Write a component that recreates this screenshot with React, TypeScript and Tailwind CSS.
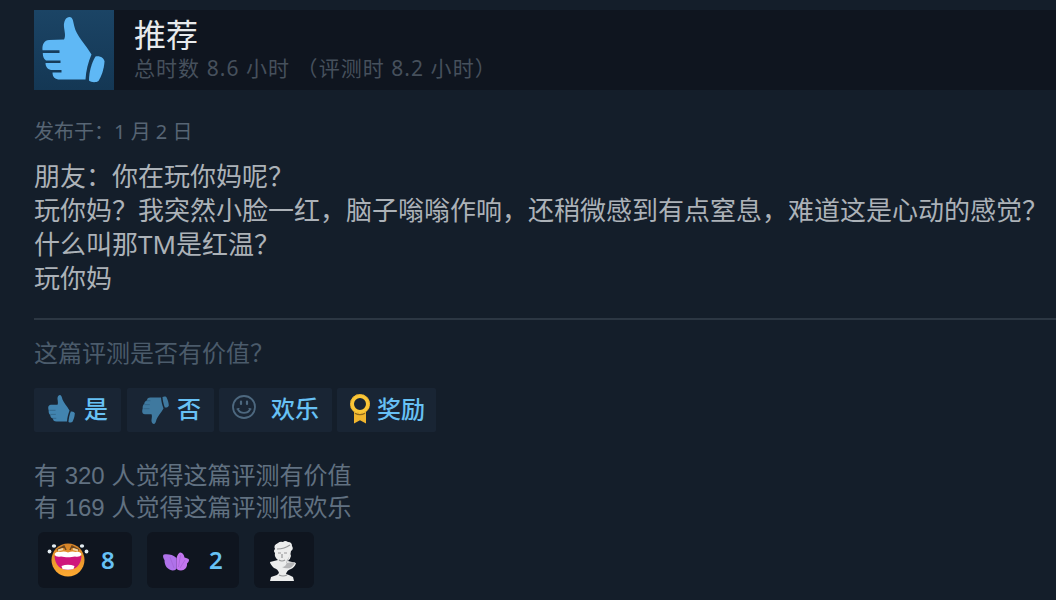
import type { ReactNode } from "react";

function ThumbIcon({ className }: { className?: string }) {
  return (
    <svg className={className} viewBox="0 0 64 66" fill="currentColor" xmlns="http://www.w3.org/2000/svg">
      <path d="M22 10 C21.500 4 24 0 27.500 0 C31 .2 31 4 32.500 10 C34 18 44 28 49.500 37.500 C46 45 44 54 43.500 62.500 L18 62.500 C13 62.500 10.500 60 10.500 55.500 L19.500 55.500 L19.500 53 L9 53 C5 52 3.500 49 3.500 46 L18.500 46 L18.500 43.500 L4 43.500 C1.500 42 .8 39 .8 36 L17.500 36 L17.500 33.300 L.5 33.300 C0 27 2.500 23.300 7 23 L22 22.500 C24 19 22.500 15 22 10 Z" />
      <path d="M53.500 39.500 C58 38.500 62 41 62.500 44.500 C62 53 59 60 56.500 64 C54 65.800 49 65.500 47 63.500 C47 55 49.500 46 53.500 39.500 Z" />
    </svg>
  );
}

function SmallThumbIcon({ className }: { className?: string }) {
  return (
    <svg className={className} width="27" height="28" viewBox="0 0 27 28" fill="currentColor">
      <path d="M9.500 4C9.300 1.500 10.500 0 12 0c1.500.2 1.800 2 2.500 4.500 1 3 4.500 6.500 7 11-1.300 3.500-2.200 7-2.500 11L8.500 26.500c-2.500 0-3.500-1-3.500-3-1.800-.5-2.500-1.500-2.700-3.300C1 19 .5 17.500.7 15.500-.5 12 .5 10 3 9.800h6.500C10.300 8 9.700 6 9.500 4z" />
      <path d="M22.800 16.500c2-.4 3.700.5 4 2-.2 3.500-1.300 6.500-2.500 8.500-1 .7-2.800.6-3.800-.1.200-3.600 1-7.100 2.300-10.400z" />
      <path d="M1.500 15.300h6M2.300 19.400h5.500M4.500 23.300h3.800" stroke="#2f5f80" strokeWidth=".7" />
    </svg>
  );
}

function SmileIcon() {
  return (
    <svg width="26" height="26" viewBox="0 0 26 26" fill="none" stroke="#4d687f" strokeWidth="1.800" strokeLinecap="round">
      <circle cx="13" cy="13" r="11" />
      <path d="M10 7.500v2.500M16 7.500v2.500" strokeWidth="2.200" />
      <path d="M7 15.500c2.500 4.500 9.500 4.500 12 0" />
      <path d="M6 15l2-.5M20 15l-2-.5" strokeWidth="1.200" />
    </svg>
  );
}

function AwardIcon() {
  return (
    <svg width="22" height="32" viewBox="0 0 22 32" fill="none">
      <path d="M5 18h12v12.500l-6-3.300-6 3.300z" fill="#f0b52e" />
      <path d="M6 20q5 3 10 0" stroke="#8d6a1e" strokeWidth="1.500" />
      <circle cx="11" cy="11" r="8" stroke="#fac637" strokeWidth="4" />
      <circle cx="11" cy="11" r="9.500" stroke="#e0a226" strokeWidth="1" strokeDasharray="2 2" />
    </svg>
  );
}

function LaughEmoji() {
  return (
    <svg width="42" height="36" viewBox="0 0 42 36" fill="none">
      <defs>
        <linearGradient id="face" x1="0" y1="0" x2="0" y2="1">
          <stop offset="0" stopColor="#d68327" />
          <stop offset="1" stopColor="#ffab32" />
        </linearGradient>
      </defs>
      <circle cx="21" cy="18" r="16.500" fill="url(#face)" />
      <path d="M10 8l7-4 2 4M32 8l-7-4-2 4" stroke="#6c4720" strokeWidth="1.500" />
      <path d="M11 8.500l5-1.500M26 7l5 1.500" stroke="#efd2a0" strokeWidth="2" />
      <path d="M7.500 14q13.500-3 27 0c-.5 9-6 14-13.500 14S8 23 7.500 14z" fill="#cf177c" />
      <path d="M7.500 12q2-3 6-2 4-1 7.500.5 4-1.500 7.500-.5 4-1 6 2c-1 3-4 3-6.500 2.500-4 1-10 1-14 0-3 .5-5.500.5-6.500-2.500z" fill="#fff" />
      <path d="M14.500 24q6.500-2.500 13 0l-1 3q-5.500 1.500-11 0z" fill="#fff" />
      <g fill="#e4edf2">
        <ellipse cx="7" cy="4" rx="2.200" ry="1.800" />
        <circle cx="2.500" cy="9.500" r="1.900" />
        <ellipse cx="35" cy="4" rx="2.200" ry="1.800" />
        <circle cx="39.500" cy="9.500" r="1.900" />
      </g>
    </svg>
  );
}

function ButterflyEmoji() {
  return (
    <svg width="28" height="20" viewBox="0 0 28 20">
      <path d="M14.500 6C11 2.500 6 2 2 2.500.5 3 1 6 2.500 8c0 6 3 9.500 8 10.500 3 0 4-1 4-3z" fill="#af72ea" />
      <path d="M14.500 7C15 3 17 .5 18.500.5c2 .5 3.500 2 4 5 2 .5 4.500 1 4.500 2.500s-1 2.500-2 3.500c.5 4-2.500 7-6 7-3 0-4.500-1-4.500-3z" fill="#c376f0" />
      <path d="M14.500 8v9M8 5l4 11M18.500 3l-2 12M23 8l-5 8" stroke="#9d5fd0" strokeWidth=".6" />
    </svg>
  );
}

function BustEmoji() {
  return (
    <svg width="28" height="42" viewBox="0 0 28 42">
      <path d="M9 3q2-2 5-1 2-2 5 0 4 0 4 4 2 3-1 5-1 3 0 5-1 4-3 5l8 2q-1 4-5 6-4 1-5 5l3 1 4 2 1 4H1l1-4 6-2 2-2q-1-4-5-5-4-4-4-6l8-2q-4-3-3-7-2-2 0-4-2-4 3-6z" fill="#eceded" />
      <path d="M20 12q1 5-2 8l-1 3 9-1q-1 4-5 6-5 1-8-1 4 0 5-5 3-4 2-10z" fill="#b4b5b7" />
      <path d="M8 9q4 0 7-1t6-3M9 13h3M15 13h3M13 14v4M10 20q3 2 6 0M10 35q4 2 8 0" stroke="#97989a" strokeWidth="1.200" fill="none" />
    </svg>
  );
}

function VoteButton({ className, children }: { className: string; children: ReactNode }) {
  return (
    <button className={`flex h-[44px] items-center rounded-[2px] bg-[#192534] text-[24px] leading-[44px] font-medium text-[#67c1f5] ${className}`}>
      {children}
    </button>
  );
}

export default function App() {
  return (
    <main
      lang="zh-CN"
      className="h-[600px] w-full overflow-hidden bg-[#141e2a] pt-[10px] pl-[34px] font-['Liberation_Sans','Noto_Sans_CJK_SC',sans-serif] whitespace-nowrap"
    >
      {/* Recommendation header */}
      <header className="flex h-[80px] bg-[#0f151f]">
        <div className="flex h-[80px] w-[80px] items-start bg-linear-to-b from-[#1b4465] to-[#143754] pt-[7px] pl-[8px]">
          <ThumbIcon className="h-[66px] w-[64px] text-[#5fb8f5]" />
        </div>
        <div className="pl-[20px]">
          <h1 className="h-[44px] text-[32px] leading-[52px] text-[#e8eaec]">推荐</h1>
          <p className="font-['Noto_Sans','Noto_Sans_CJK_SC',sans-serif] text-[21px] leading-[28px] tracking-[1.05px] text-[#46505c]">
            总时数 8.6 小时 （评测时 8.2 小时）
          </p>
        </div>
      </header>

      <p className="mt-[28px] h-[28px] font-['Noto_Sans','Noto_Sans_CJK_SC',sans-serif] text-[20px] leading-[28px] text-[#576574]">
        发布于：1 月 2 日
      </p>

      {/* Review body */}
      <div className="mt-[13px] h-[161px] border-b-2 border-[#2c3743] font-['Noto_Sans','Noto_Sans_CJK_SC',sans-serif] text-[26px] leading-[34px] text-[#acb2b8]">
        <p>朋友：你在玩你妈呢？</p>
        <p>玩你妈？我突然小脸一红，脑子嗡嗡作响，还稍微感到有点窒息，难道这是心动的感觉？</p>
        <p>什么叫那TM是红温？</p>
        <p>玩你妈</p>
      </div>

      <p className="mt-[18px] h-[32px] text-[24px] leading-[32px] text-[#4b5b6b]">这篇评测是否有价值？</p>

      {/* Vote controls */}
      <div className="mt-[18px] flex">
        <VoteButton className="w-[87px] pl-[14px]">
          <SmallThumbIcon className="mr-[9px] mb-[2px] text-[#4284b0]" />
          是
        </VoteButton>
        <VoteButton className="ml-[6px] w-[87px] pl-[15px]">
          <SmallThumbIcon className="mr-[8px] -scale-y-100 text-[#3f799f]" />
          否
        </VoteButton>
        <VoteButton className="ml-[5px] w-[113px] pl-[12px]">
          <span className="mr-[14px] mb-[6px]">
            <SmileIcon />
          </span>
          欢乐
        </VoteButton>
        <VoteButton className="ml-[5px] w-[99px] pl-[12px]">
          <span className="mr-[6px] mb-[2px]">
            <AwardIcon />
          </span>
          奖励
        </VoteButton>
      </div>

      <div className="mt-[28px] h-[64px] text-[24px] leading-[32px] text-[#617181]">
        <p>有 320 人觉得这篇评测有价值</p>
        <p>有 169 人觉得这篇评测很欢乐</p>
      </div>

      {/* Reactions */}
      <div className="mt-[8px] ml-[4px] flex h-[56px] font-['Noto_Sans',sans-serif] text-[24px] font-semibold text-[#67c1f5]">
        <div className="flex w-[94px] items-center rounded-md bg-[#0f151f] pl-[9px]">
          <LaughEmoji />
          <span className="ml-[12px]">8</span>
        </div>
        <div className="ml-[15px] flex w-[92px] items-center rounded-md bg-[#0f151f] pl-[15px]">
          <span className="pt-[4px]">
            <ButterflyEmoji />
          </span>
          <span className="ml-[19px]">2</span>
        </div>
        <div className="ml-[15px] flex w-[60px] items-center rounded-md bg-[#0f151f] pl-[15px]">
          <span className="pt-[2px]">
            <BustEmoji />
          </span>
        </div>
      </div>
    </main>
  );
}
